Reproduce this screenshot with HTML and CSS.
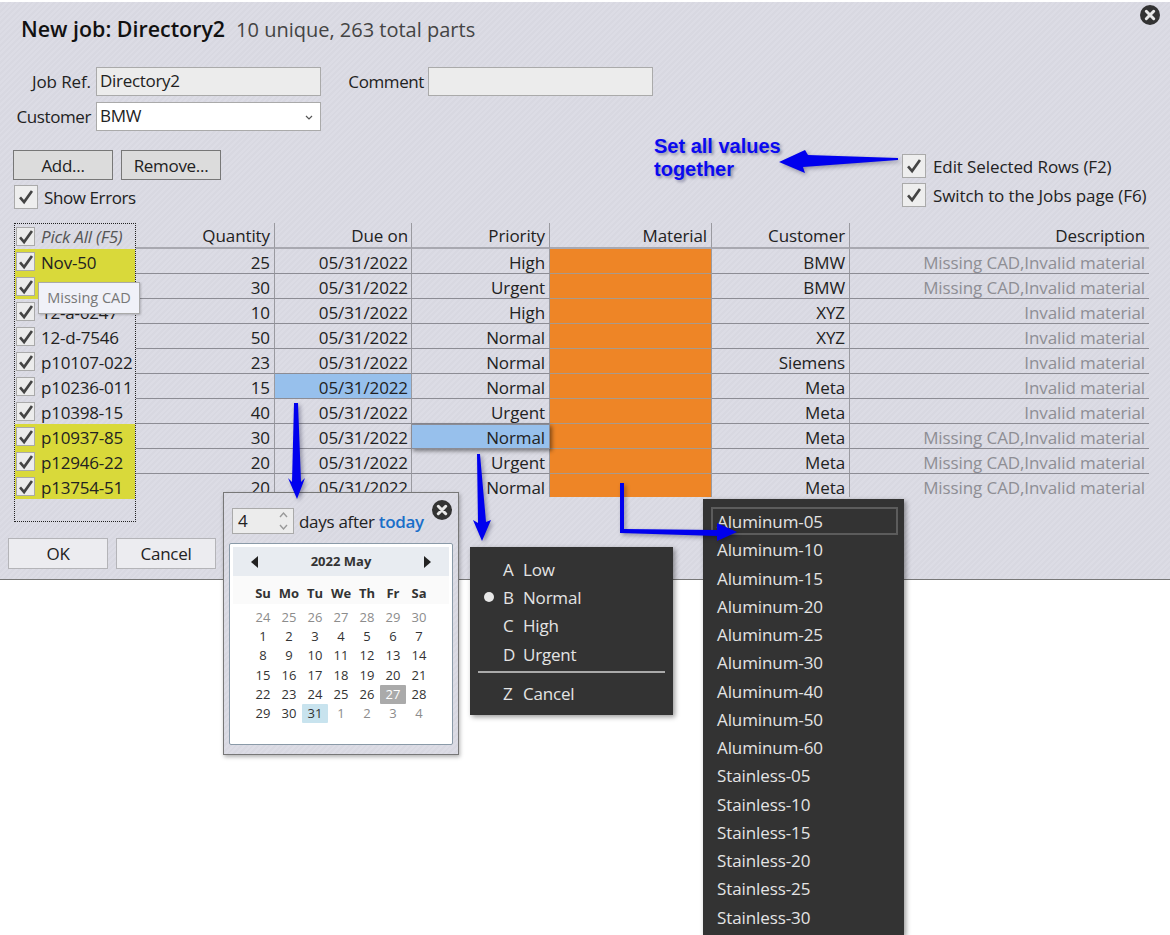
FILE: index.html
```html
<!DOCTYPE html>
<html lang="en">
<head>
    <meta charset="UTF-8">
    <title>New job</title>
    <link rel="stylesheet" href="styles.css">
</head>
<body>
<svg class="defs" width="0" height="0">
    <symbol id="tick" viewBox="0 0 24 24"><path d="M5.5 12.5l4.4 5L18.5 5.5" fill="none" stroke="#444" stroke-width="2.9"/></symbol>
    <symbol id="close" viewBox="0 0 20 20"><circle cx="10" cy="10" r="10" fill="#333"/><path d="M6.3 6.3l7.4 7.4M13.7 6.3l-7.4 7.4" stroke="#e8e8e8" stroke-width="3" stroke-linecap="round"/></symbol>
</svg>
<div class="page">
    <div class="dialog">
        <svg class="close dialog-close"><use href="#close"/></svg>
        <div class="title"><b>New job: Directory2</b><span>10 unique, 263 total parts</span></div>

        <div class="form">
            <div class="form-row">
                <label class="lbl lbl-ref">Job Ref.</label>
                <div class="field ro">Directory2</div>
                <label class="lbl lbl-comment">Comment</label>
                <div class="field ro"></div>
            </div>
            <div class="form-row">
                <label class="lbl">Customer</label>
                <div class="field combo">BMW
                    <svg class="chev" width="8" height="5" viewBox="0 0 8 5"><path d="M1 1l3 3 3-3" fill="none" stroke="#555" stroke-width="1.2"/></svg>
                </div>
            </div>
        </div>

        <div class="toolbar">
            <div class="toolbar-left">
                <div class="btns">
                    <button class="btn">Add...</button>
                    <button class="btn">Remove...</button>
                </div>
                <div class="opt"><span class="chk"><svg><use href="#tick"/></svg></span>Show Errors</div>
            </div>
            <div class="toolbar-right">
                <div class="opt"><span class="chk"><svg><use href="#tick"/></svg></span>Edit Selected Rows (F2)</div>
                <div class="opt"><span class="chk"><svg><use href="#tick"/></svg></span>Switch to the Jobs page (F6)</div>
            </div>
        </div>

        <div class="table">
            <div class="picks">
                <div class="pick head"><span class="chk sm"><svg><use href="#tick"/></svg></span><i>Pick All (F5)</i></div>
                <div class="pick err"><span class="chk sm"><svg><use href="#tick"/></svg></span>Nov-50</div>
                <div class="pick err"><span class="chk sm"><svg><use href="#tick"/></svg></span>Nov-51</div>
                <div class="pick"><span class="chk sm"><svg><use href="#tick"/></svg></span>12-a-6247</div>
                <div class="pick"><span class="chk sm"><svg><use href="#tick"/></svg></span>12-d-7546</div>
                <div class="pick"><span class="chk sm"><svg><use href="#tick"/></svg></span>p10107-022</div>
                <div class="pick"><span class="chk sm"><svg><use href="#tick"/></svg></span>p10236-011</div>
                <div class="pick"><span class="chk sm"><svg><use href="#tick"/></svg></span>p10398-15</div>
                <div class="pick err"><span class="chk sm"><svg><use href="#tick"/></svg></span>p10937-85</div>
                <div class="pick err"><span class="chk sm"><svg><use href="#tick"/></svg></span>p12946-22</div>
                <div class="pick err"><span class="chk sm"><svg><use href="#tick"/></svg></span>p13754-51</div>
            </div>
            <div class="grid">
                <div class="c h">Quantity</div><div class="c h">Due on</div><div class="c h">Priority</div><div class="c h">Material</div><div class="c h">Customer</div><div class="c h">Description</div>

                <div class="c">25</div><div class="c">05/31/2022</div><div class="c">High</div><div class="c bad"></div><div class="c">BMW</div><div class="c note">Missing CAD,Invalid material</div>
                <div class="c">30</div><div class="c">05/31/2022</div><div class="c">Urgent</div><div class="c bad"></div><div class="c">BMW</div><div class="c note">Missing CAD,Invalid material</div>
                <div class="c">10</div><div class="c">05/31/2022</div><div class="c">High</div><div class="c bad"></div><div class="c">XYZ</div><div class="c note">Invalid material</div>
                <div class="c">50</div><div class="c">05/31/2022</div><div class="c">Normal</div><div class="c bad"></div><div class="c">XYZ</div><div class="c note">Invalid material</div>
                <div class="c">23</div><div class="c">05/31/2022</div><div class="c">Normal</div><div class="c bad"></div><div class="c">Siemens</div><div class="c note">Invalid material</div>
                <div class="c">15</div><div class="c sel">05/31/2022</div><div class="c">Normal</div><div class="c bad"></div><div class="c">Meta</div><div class="c note">Invalid material</div>
                <div class="c">40</div><div class="c">05/31/2022</div><div class="c">Urgent</div><div class="c bad"></div><div class="c">Meta</div><div class="c note">Invalid material</div>
                <div class="c">30</div><div class="c">05/31/2022</div><div class="c sel raised">Normal</div><div class="c bad"></div><div class="c">Meta</div><div class="c note">Missing CAD,Invalid material</div>
                <div class="c">20</div><div class="c">05/31/2022</div><div class="c">Urgent</div><div class="c bad"></div><div class="c">Meta</div><div class="c note">Missing CAD,Invalid material</div>
                <div class="c last">20</div><div class="c last">05/31/2022</div><div class="c last">Normal</div><div class="c last bad"></div><div class="c last">Meta</div><div class="c last note">Missing CAD,Invalid material</div>
            </div>
        </div>

        <div class="footer">
            <button class="btn light">OK</button>
            <button class="btn light">Cancel</button>
        </div>
    </div>

    <div class="tooltip">Missing CAD</div>

    <!-- date popup -->
    <div class="datepop">
        <svg class="close date-close"><use href="#close"/></svg>
        <div class="date-top">
            <div class="spin">4
                <svg class="spin-arrows" width="9" height="20" viewBox="0 0 9 20"><path d="M1 6l3.5-4L8 6M1 14l3.5 4L8 14" fill="none" stroke="#999" stroke-width="1.4"/></svg>
            </div>
            <span>days after <a class="today">today</a></span>
        </div>
        <div class="cal">
            <div class="cal-head"><span class="tri left"></span><b>2022 May</b><span class="tri right"></span></div>
            <div class="cal-dow"><b>Su</b><b>Mo</b><b>Tu</b><b>We</b><b>Th</b><b>Fr</b><b>Sa</b></div>
            <div class="cal-days">
                <span class="off">24</span><span class="off">25</span><span class="off">26</span><span class="off">27</span><span class="off">28</span><span class="off">29</span><span class="off">30</span>
                <span>1</span><span>2</span><span>3</span><span>4</span><span>5</span><span>6</span><span>7</span>
                <span>8</span><span>9</span><span>10</span><span>11</span><span>12</span><span>13</span><span>14</span>
                <span>15</span><span>16</span><span>17</span><span>18</span><span>19</span><span>20</span><span>21</span>
                <span>22</span><span>23</span><span>24</span><span>25</span><span>26</span><span class="now">27</span><span>28</span>
                <span>29</span><span>30</span><span class="picked">31</span><span class="off">1</span><span class="off">2</span><span class="off">3</span><span class="off">4</span>
            </div>
        </div>
    </div>

    <!-- priority menu -->
    <div class="menu prio">
        <div class="mi"><u></u><em>A</em>Low</div>
        <div class="mi"><u class="dot"></u><em>B</em>Normal</div>
        <div class="mi"><u></u><em>C</em>High</div>
        <div class="mi"><u></u><em>D</em>Urgent</div>
        <div class="sep"></div>
        <div class="mi"><u></u><em>Z</em>Cancel</div>
    </div>

    <!-- material menu -->
    <div class="menu mats">
        <div class="mat cur">Aluminum-05</div>
        <div class="mat">Aluminum-10</div>
        <div class="mat">Aluminum-15</div>
        <div class="mat">Aluminum-20</div>
        <div class="mat">Aluminum-25</div>
        <div class="mat">Aluminum-30</div>
        <div class="mat">Aluminum-40</div>
        <div class="mat">Aluminum-50</div>
        <div class="mat">Aluminum-60</div>
        <div class="mat">Stainless-05</div>
        <div class="mat">Stainless-10</div>
        <div class="mat">Stainless-15</div>
        <div class="mat">Stainless-20</div>
        <div class="mat">Stainless-25</div>
        <div class="mat">Stainless-30</div>
    </div>

    <!-- hand drawn notes on top of the shot -->
    <div class="note-text">Set all values<br>together</div>
    <svg class="arrows" width="1170" height="935" viewBox="0 0 1170 935">
        <polygon points="898,158 808,155 805,150 779,162 805,173 803,167 898,160"/>
        <polygon points="294,403 298,403 301,482 305,478 297,499 288,478 292,482"/>
        <polygon points="477,454 480,454 486,522 491,520 482,541 473,520 478,523"/>
        <polygon points="620,483 624,483 624,529 717,530 717,523 737,532 717,541 717,536 620,533"/>
    </svg>
</div>
</body>
</html>
```

FILE: styles.css
```css
* {
    box-sizing: border-box;
    margin: 0;
    padding: 0;
}

html, body {
    height: 935px;
    overflow: hidden;
    background: #fff;
}

body {
    font-family: "Open Sans", "Noto Sans", sans-serif;
    font-size: 17px;
    color: #222;
}

.defs {
    position: absolute;
}

.page {
    position: relative;
    width: 1170px;
    height: 935px;
    overflow: hidden;
}

.dialog {
    position: relative;
    margin-top: 2px;
    height: 578px;
    padding-top: 12px;
    background: repeating-linear-gradient(135deg, #dcdce5 0 2px, #d8d8e1 2px 4px);
    border-bottom: 1px solid #777;
}

.close {
    position: absolute;
    width: 20px;
    height: 20px;
}

.dialog-close {
    top: 3px;
    right: 10px;
}

.title {
    display: flex;
    align-items: baseline;
    gap: 11px;
    height: 30px;
    line-height: 30px;
    margin-left: 21px;
    font-size: 21.4px;
    color: #111;
}

.title b {
    font-weight: 600;
}

.title span {
    font-size: 20px;
    color: #444;
}

.form {
    margin-top: 23px;
}

.form-row {
    display: flex;
    align-items: center;
    height: 29px;
    margin-bottom: 6px;
}

.lbl {
    width: 91px;
    margin-right: 5px;
    text-align: right;
    letter-spacing: -0.4px;
}

.lbl-ref {
    letter-spacing: -0.1px;
}

.lbl-comment {
    width: 103px;
    margin-right: 4px;
}

.field {
    position: relative;
    width: 225px;
    height: 29px;
    line-height: 26px;
    padding-left: 3px;
    border: 1px solid #aaa;
    letter-spacing: -0.3px;
}

.ro {
    background: #ececec;
}

.combo {
    background: #fff;
}

.chev {
    position: absolute;
    right: 7px;
    top: 12px;
}

.toolbar {
    display: flex;
    justify-content: space-between;
    height: 73px;
    margin-top: 19px;
    padding: 0 21px 0 13px;
}

.btns {
    display: flex;
    gap: 8px;
}

.btn {
    width: 100px;
    height: 30px;
    font: inherit;
    color: #222;
    background: #dcdcdc;
    border: 1px solid #777;
    letter-spacing: -0.3px;
}

.opt {
    display: flex;
    align-items: center;
    height: 24px;
    letter-spacing: -0.4px;
}

.toolbar-left .opt {
    margin: 5px 0 0 1px;
}

.toolbar-left .chk {
    margin-right: 6px;
}

.toolbar-right {
    width: 247px;
    padding-top: 4px;
}

.toolbar-right .opt {
    margin-bottom: 5px;
    white-space: nowrap;
    letter-spacing: -0.1px;
}

.chk {
    flex: none;
    width: 24px;
    height: 24px;
    margin-right: 7px;
    background: #eee;
    border: 1px solid #aaa;
}

.chk svg {
    display: block;
    width: 22px;
    height: 22px;
}

.chk.sm {
    width: 19px;
    height: 19px;
    margin: -2px 6px 0 1px;
    background: #ececec;
}

.chk.sm svg {
    margin: -2px;
}

.table {
    display: flex;
    margin-left: 14px;
    width: 1135px;
}

.picks {
    width: 122px;
    height: 299px;
    border: 1px dotted #222;
    letter-spacing: -0.2px;
}

.pick {
    display: flex;
    align-items: center;
    height: 25px;
    padding-top: 2px;
    white-space: nowrap;
    overflow: hidden;
}

.pick.head {
    padding-top: 0;
    color: #555;
}

.pick.head .chk.sm {
    margin-top: 0;
}

.pick.err {
    background: #d9d93a;
}

.grid {
    flex: none;
    display: grid;
    grid-template-columns: 139px 137px 138px 162px 138px 299px;
    grid-template-rows: 26px repeat(9, 25px) 23px;
    width: 1013px;
}

.c {
    height: 25px;
    line-height: 28px;
    padding-right: 4px;
    text-align: right;
    white-space: nowrap;
    border-right: 1px solid #9a9aa0;
    border-bottom: 1px solid #8c8c94;
    letter-spacing: -0.1px;
}

.c:nth-child(6n+2) {
    padding-right: 3px;
}

.c:nth-child(6n) {
    border-right: 0;
}

.c.h {
    height: 26px;
    line-height: 25px;
    border-bottom: 2px solid #a8a8b0;
}

.c.last {
    height: 23px;
    border-bottom: 0;
}

.c.bad {
    background: #ee8526;
    border-bottom-color: #a89a8c;
}

.c.sel {
    background: #97c0ec;
}

.c.raised {
    position: relative;
    margin-left: -1px;
    line-height: 26px;
    border: 1px solid #8c8c94;
    box-shadow: 2px 2px 4px rgba(0, 0, 0, 0.45);
}

.note {
    color: #8e8e94;
}

.footer {
    display: flex;
    gap: 8px;
    margin: 16px 0 0 8px;
}

.btn.light {
    height: 31px;
    background: #ececf0;
    border-color: #b4b4b8;
}

.tooltip {
    position: absolute;
    left: 38px;
    top: 282px;
    width: 102px;
    height: 32px;
    line-height: 30px;
    text-align: center;
    font-size: 14.5px;
    color: #777;
    background: #f0f1f8;
    border: 1px solid #aaa;
    box-shadow: 1px 1px 2px rgba(0, 0, 0, 0.2);
}

.datepop {
    position: absolute;
    left: 223px;
    top: 492px;
    width: 236px;
    height: 263px;
    padding: 15px 5px 0 5px;
    background: repeating-linear-gradient(135deg, #dcdce5 0 2px, #d8d8e1 2px 4px);
    border: 1px solid #777;
    box-shadow: 1px 2px 4px rgba(0, 0, 0, 0.3);
}

.date-close {
    top: 7px;
    right: 6px;
}

.date-top {
    display: flex;
    align-items: center;
    gap: 5px;
    margin-left: 3px;
    letter-spacing: -0.3px;
}

.spin {
    position: relative;
    width: 62px;
    height: 26px;
    line-height: 24px;
    padding-left: 5px;
    background: #ececec;
    border: 1px solid #aaa;
}

.spin-arrows {
    position: absolute;
    right: 5px;
    top: 2px;
}

.today {
    color: #1a6fc9;
    font-weight: 600;
}

.cal {
    width: 224px;
    height: 202px;
    margin-top: 9px;
    padding: 3px;
    font-size: 13px;
    background: #fff;
    border: 1px solid #8a9aa8;
    border-radius: 2px;
}

.cal-head {
    display: flex;
    align-items: center;
    justify-content: space-between;
    height: 29px;
    line-height: 27px;
    padding: 0 18px;
    background: #e8ecf1;
    color: #333;
}

.tri {
    width: 0;
    height: 0;
    border-top: 6px solid transparent;
    border-bottom: 6px solid transparent;
}

.tri.left {
    border-right: 7px solid #222;
}

.tri.right {
    border-left: 7px solid #222;
}

.cal-dow, .cal-days {
    display: grid;
    grid-template-columns: repeat(7, 26px);
    justify-content: center;
    text-align: center;
}

.cal-dow {
    height: 28px;
    line-height: 35px;
    background: #fafafa;
    color: #333;
}

.cal-days {
    margin-top: 4px;
    grid-auto-rows: 19.2px;
    line-height: 19px;
    color: #333;
}

.cal-days .off {
    color: #8c8c8c;
}

.cal-days .now {
    background: #aaa;
    color: #fff;
    border-radius: 1px;
}

.cal-days .picked {
    background: #c8e3ee;
    border-radius: 1px;
}

.menu {
    position: absolute;
    background: #333;
    color: #e4e4e4;
    box-shadow: 2px 2px 5px rgba(0, 0, 0, 0.4);
}

.prio {
    left: 470px;
    top: 547px;
    width: 203px;
    height: 168px;
    padding-top: 8px;
}

.mi {
    display: flex;
    align-items: center;
    height: 28.3px;
    letter-spacing: -0.2px;
}

.mi u {
    flex: none;
    width: 10px;
    height: 10px;
    margin: 0 9px 0 14px;
    border-radius: 50%;
}

.mi u.dot {
    background: #e8e8e8;
}

.mi em {
    width: 20px;
    font-style: normal;
}

.sep {
    height: 2px;
    margin: 3px 8px 6px 8px;
    background: #aaa;
}

.mats {
    left: 703px;
    top: 499px;
    width: 201px;
    height: 436px;
    padding: 8px 6px 0 8px;
    overflow: hidden;
}

.mat {
    height: 28.25px;
    line-height: 28px;
    padding-left: 5px;
    letter-spacing: -0.1px;
    border: 1px solid transparent;
}

.mat.cur {
    border: 2px solid #5c5c5c;
    line-height: 25px;
    padding-left: 4px;
}

.note-text {
    position: absolute;
    left: 654px;
    top: 135px;
    font: bold 20px/23px "Liberation Sans", Arial, sans-serif;
    color: #0a0af0;
    text-shadow: 2px 2px 3px rgba(0, 0, 60, 0.35);
}

.arrows {
    position: absolute;
    left: 0;
    top: 0;
    fill: #0000ee;
    filter: drop-shadow(2px 2px 2px rgba(0, 0, 40, 0.35));
    pointer-events: none;
}
```
